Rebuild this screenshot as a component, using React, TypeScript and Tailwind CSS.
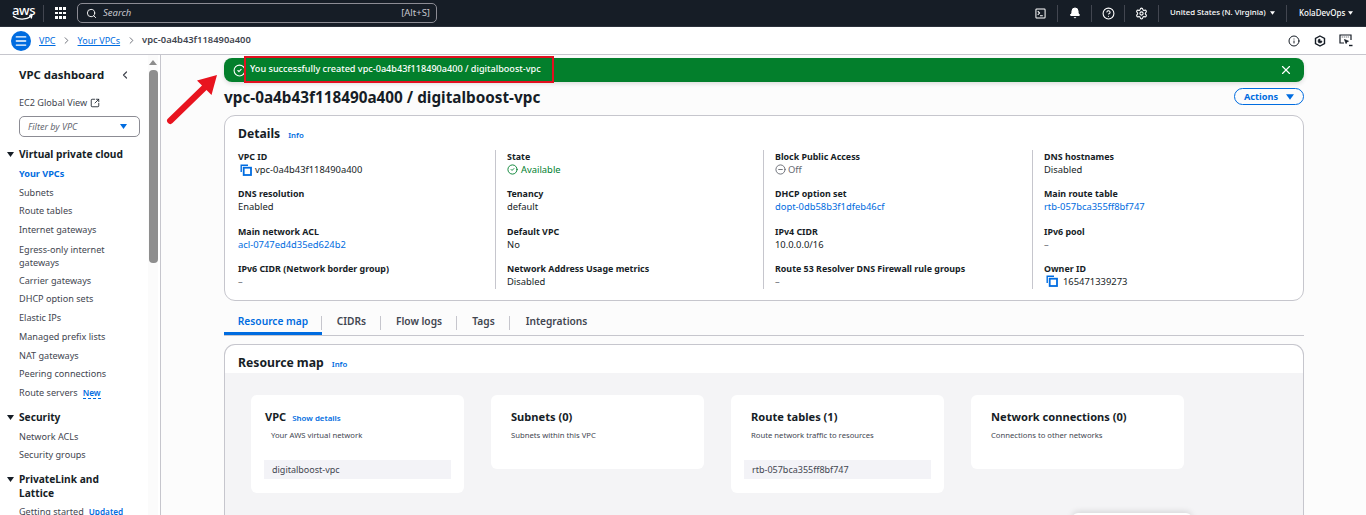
import React from 'react';
import { Search, Bell, CircleHelp, Settings, X, Info, Menu, ChevronRight, ChevronLeft, CircleCheck, CircleMinus, SquareArrowOutUpRight } from 'lucide-react';

const Tri = ({ className }: { className: string }) => (
  <svg viewBox="0 0 10 7" className={className} fill="currentColor"><path d="M0 0h10L5 7z" /></svg>
);

const CopyIcon = () => (
  <svg viewBox="0 0 12 12" className="w-[12px] h-[12px] text-[#006ce0] shrink-0" fill="none" stroke="currentColor" strokeWidth="1.4">
    <path d="M8 1.2H1.2V8" />
    <rect x="3.7" y="3.7" width="7.3" height="7.3" strokeWidth="1.8" />
  </svg>
);

const TerminalIcon = () => (
  <svg viewBox="0 0 12 12" className="w-[11px] h-[11px]" fill="none" stroke="currentColor" strokeWidth="1.1">
    <rect x="1" y="1" width="10" height="10" rx="0.8" />
    <path d="M3 3.5L5 5.5 3 7.5M5.5 8.5H8.5" />
  </svg>
);

const HexIcon = () => (
  <svg viewBox="0 0 12 12" className="w-[12px] h-[12px] text-[#161d26]" fill="none" stroke="currentColor" strokeWidth="1.4">
    <path d="M6 1l4.5 2.5v5L6 11 1.5 8.5v-5z" />
    <path d="M6 4a2 2 0 1 0 2 2H6z" fill="currentColor" strokeWidth="0.6" />
  </svg>
);

const ScreenIcon = () => (
  <svg viewBox="0 0 14 13" className="w-[14px] h-[13px] text-[#161d26]" fill="none" stroke="currentColor" strokeWidth="1.2">
    <path d="M5 9H1V1h11v5" />
    <path d="M2.8 3h.8M4.8 3h.8M6.8 3h.8M8.8 3h.8" strokeWidth="1" />
    <path d="M5.5 5.5l4 1.7-1.7.7-.7 1.7z" fill="currentColor" strokeWidth="0.8" />
    <path d="M10 11.5h3.5" strokeWidth="1.4" />
  </svg>
);

const Sep = () => <div className="w-px h-[17px] bg-[#424650] shrink-0" />;

const IconCell = ({ w, children }: { w: string; children: React.ReactNode }) => (
  <div className={`${w} flex justify-center items-center shrink-0`}>{children}</div>
);

const TopBar = () => (
  <header className="h-[27px] bg-[#161d26] flex items-center text-white shrink-0 border-b border-[#2a303a]">
    <div className="w-[43px] pl-[12px] flex flex-col items-start leading-none">
      <span className="text-[13px] font-medium leading-[9px] tracking-tight">aws</span>
      <svg viewBox="0 0 22 6" className="w-[22px] h-[6px] text-white" fill="none" stroke="currentColor" strokeWidth="1.2"><path d="M1 1c5 4 13 4 18 .5M17 .8l3-.3-.8 3" /></svg>
    </div>
    <Sep />
    <div className="w-[33px] flex justify-center">
      <div className="grid grid-cols-3 gap-[1.5px]">
        {Array.from({ length: 9 }).map((_, i) => <span key={i} className="w-[2.8px] h-[2.8px] bg-white" />)}
      </div>
    </div>
    <div className="w-[360px] h-[20px] border border-[#8c8c94] rounded-[5px] flex items-center pl-[8px] pr-[6px] text-[#c6c6cd] text-[9.5px]">
      <Search className="w-[11px] h-[11px] text-white mr-[6px]" strokeWidth={2} />
      <span className="italic flex-1">Search</span>
      <span>[Alt+S]</span>
    </div>
    <div className="flex-1" />
    <IconCell w="w-[24px] pr-[9px]"><TerminalIcon /></IconCell>
    <Sep />
    <IconCell w="w-[33px]"><Bell className="w-[12px] h-[12px]" fill="white" /></IconCell>
    <Sep />
    <IconCell w="w-[32px]"><CircleHelp className="w-[13px] h-[13px]" /></IconCell>
    <Sep />
    <IconCell w="w-[33px]"><Settings className="w-[13px] h-[13px]" /></IconCell>
    <Sep />
    <div className="w-[127px] flex items-center pl-[11px] shrink-0">
      <span className="text-[7.8px] font-medium whitespace-nowrap">United States (N. Virginia)</span>
      <Tri className="w-[5px] h-[4px] ml-[4px]" />
    </div>
    <Sep />
    <div className="w-[79px] flex items-center pl-[12px] shrink-0">
      <span className="text-[8px] font-medium">KolaDevOps</span>
      <Tri className="w-[5px] h-[4px] ml-[3px]" />
    </div>
  </header>
);

const BreadcrumbBar = () => (
  <div className="h-[28px] bg-white border-b border-[#c6c6cd] flex items-center shrink-0 text-[9px] pl-[11px] pr-[13px]">
    <div className="w-[20px] h-[20px] rounded-full bg-[#006ce0] flex items-center justify-center mr-[8px]">
      <Menu className="w-[14px] h-[14px] text-white" strokeWidth={2.4} />
    </div>
    <a className="text-[#006ce0] underline">VPC</a>
    <ChevronRight className="w-[11px] h-[11px] mx-[5.5px] text-[#656871]" />
    <a className="text-[#006ce0] underline">Your VPCs</a>
    <ChevronRight className="w-[11px] h-[11px] mx-[5.5px] text-[#656871]" />
    <span className="text-[#424650] font-semibold text-[9.4px]">vpc-0a4b43f118490a400</span>
    <div className="flex-1" />
    <Info className="w-[12px] h-[12px] text-[#161d26]" />
    <div className="ml-[14px] flex"><HexIcon /></div>
    <div className="ml-[13px] flex"><ScreenIcon /></div>
  </div>
);

const NavItem = ({ label, active, badge, two }: { label: string; active?: boolean; badge?: string; two?: boolean }) => (
  <div className={`${two ? 'h-[32px] leading-[13px] pt-[3px]' : 'h-[18.7px] leading-[18.7px]'} text-[9.1px] whitespace-pre-line ${active ? 'text-[#006ce0] font-bold' : 'text-[#424650]'}`}>
    {label}
    {badge && <span className="ml-[5px] text-[8.2px] text-[#006ce0] font-semibold border-b border-dashed border-[#006ce0]">{badge}</span>}
  </div>
);

const NavSection = ({ title }: { title: string }) => (
  <div className="flex items-start">
    <Tri className="w-[7px] h-[5px] text-[#161d26] -ml-[12px] mr-[5px] mt-[5px] shrink-0" />
    <div className="text-[10.2px] font-bold leading-[14px] text-[#161d26] whitespace-pre-line">{title}</div>
  </div>
);

const Sidebar = () => (
  <aside className="w-[161px] shrink-0 bg-white border-r border-[#c6c6cd] flex h-full overflow-hidden">
    <div className="w-[148px] pl-[19px] shrink-0 overflow-hidden">
      <div className="flex items-center h-[16px] mt-[12px] pr-[17px]">
        <span className="flex-1 text-[11.4px] font-bold text-[#161d26]">VPC dashboard</span>
        <ChevronLeft className="w-[12px] h-[12px] text-[#424650]" strokeWidth={2.4} />
      </div>
      <div className="flex items-center mt-[13px] text-[9.1px] text-[#424650] h-[14px]">
        EC2 Global View
        <SquareArrowOutUpRight className="w-[10px] h-[10px] ml-[3px] text-[#161d26]" strokeWidth={2} />
      </div>
      <div className="mt-[6px] w-[121px] h-[21px] border border-[#8c8c94] rounded-[5px] flex items-center pl-[8px] pr-[12px] text-[9px] italic text-[#656871]">
        <span className="flex-1">Filter by VPC</span>
        <Tri className="w-[7px] h-[5px] text-[#006ce0]" />
      </div>
      <div className="mt-[10px]"><NavSection title="Virtual private cloud" /></div>
      <div className="mt-[4px]">
        <NavItem label="Your VPCs" active />
        <NavItem label="Subnets" />
        <NavItem label="Route tables" />
        <NavItem label="Internet gateways" />
        <NavItem two label={'Egress-only internet\ngateways'} />
        <NavItem label="Carrier gateways" />
        <NavItem label="DHCP option sets" />
        <NavItem label="Elastic IPs" />
        <NavItem label="Managed prefix lists" />
        <NavItem label="NAT gateways" />
        <NavItem label="Peering connections" />
        <NavItem label="Route servers" badge="New" />
      </div>
      <div className="mt-[7px]"><NavSection title="Security" /></div>
      <div className="mt-[4px]">
        <NavItem label="Network ACLs" />
        <NavItem label="Security groups" />
      </div>
      <div className="mt-[7px]"><NavSection title={'PrivateLink and\nLattice'} /></div>
      <div className="mt-[3px]">
        <NavItem label="Getting started" badge="Updated" />
      </div>
    </div>
    <div className="w-[10px] shrink-0 bg-[#fbfbfb] flex flex-col items-center pt-[5px]">
      <svg viewBox="0 0 8 5" className="w-[8px] h-[5px] text-[#8c8c8c]" fill="currentColor"><path d="M4 0l4 5H0z" /></svg>
      <div className="w-[9px] h-[193px] mt-[5px] bg-[#8e8e8e] rounded-b-[4px] rounded-t-[4px]" />
    </div>
  </aside>
);

const Field = ({ label, children, link }: { label: string; children: React.ReactNode; link?: boolean }) => (
  <div className="h-[37.3px]">
    <div className="text-[8.9px] font-bold text-[#161d26] leading-[13px]">{label}</div>
    <div className={`text-[9.4px] leading-[13px] flex items-center ${link ? 'text-[#006ce0]' : 'text-[#161d26]'}`}>{children}</div>
  </div>
);

const Dash = () => <span className="text-[#656871]">–</span>;

const Details = () => (
  <section className="h-[186px] bg-white border border-[#c6c6cd] rounded-[11px] pl-[13px] pt-[9px]">
    <div className="flex items-baseline h-[19px]">
      <h2 className="text-[12.2px] font-bold text-[#161d26]">Details</h2>
      <a className="ml-[8px] text-[7.8px] font-semibold text-[#006ce0]">Info</a>
    </div>
    <div className="grid grid-cols-[258px_268px_269px_1fr] mt-[6px]">
      <div className="h-[139px] border-r border-[#c6c6cd]">
        <Field label="VPC ID"><span className="ml-[2px] mr-[3px] flex"><CopyIcon /></span>vpc-0a4b43f118490a400</Field>
        <Field label="DNS resolution">Enabled</Field>
        <Field label="Main network ACL" link>acl-0747ed4d35ed624b2</Field>
        <Field label="IPv6 CIDR (Network border group)"><Dash /></Field>
      </div>
      <div className="h-[139px] border-r border-[#c6c6cd] pl-[11px]">
        <Field label="State">
          <span className="text-[#00802f] flex items-center"><CircleCheck className="w-[11px] h-[11px] mr-[3px]" />Available</span>
        </Field>
        <Field label="Tenancy">default</Field>
        <Field label="Default VPC">No</Field>
        <Field label="Network Address Usage metrics">Disabled</Field>
      </div>
      <div className="h-[139px] border-r border-[#c6c6cd] pl-[11px]">
        <Field label="Block Public Access">
          <span className="text-[#656871] flex items-center"><CircleMinus className="w-[11px] h-[11px] mr-[2px]" />Off</span>
        </Field>
        <Field label="DHCP option set" link>dopt-0db58b3f1dfeb46cf</Field>
        <Field label="IPv4 CIDR">10.0.0.0/16</Field>
        <Field label="Route 53 Resolver DNS Firewall rule groups"><Dash /></Field>
      </div>
      <div className="h-[139px] pl-[11px]">
        <Field label="DNS hostnames">Disabled</Field>
        <Field label="Main route table" link>rtb-057bca355ff8bf747</Field>
        <Field label="IPv6 pool"><Dash /></Field>
        <Field label="Owner ID"><span className="ml-[2px] mr-[5px] flex"><CopyIcon /></span>165471339273</Field>
      </div>
    </div>
  </section>
);

const Tab = ({ label, active, w, last }: { label: string; active?: boolean; w: string; last?: boolean }) => (
  <div className={`${w} h-full flex items-start justify-center leading-[14px] relative text-[10.2px] font-semibold ${active ? 'text-[#006ce0] border-b-[3px] border-[#006ce0]' : 'text-[#424650]'}`}>
    <span>{label}</span>
    {!last && <span className="absolute right-0 top-[2px] h-[14px] w-px bg-[#c6c6cd]" />}
  </div>
);

const Tabs = () => (
  <div className="h-[22px] mt-[13px] flex border-b border-[#c6c6cd]">
    <Tab active label="Resource map" w="w-[98px]" />
    <Tab label="CIDRs" w="w-[59px]" />
    <Tab label="Flow logs" w="w-[76px]" />
    <Tab label="Tags" w="w-[53px]" />
    <Tab last label="Integrations" w="w-[93px]" />
  </div>
);

const MapCard = ({ title, sub, inset, vpc, action }: { title: string; sub: string; inset?: string; vpc?: boolean; action?: string }) => (
  <div className={`w-[213px] bg-white rounded-[6px] pt-[14px] ${inset ? 'h-[98px] px-[13px]' : 'h-[74px] px-[20px]'}`}>
    <div className={`flex items-baseline h-[16px] ${inset ? (vpc ? 'pl-px' : 'pl-[7px]') : ''}`}>
      <h3 className="text-[11.1px] font-bold text-[#161d26]">{title}</h3>
      {action && <a className="ml-[6px] text-[7.9px] font-semibold text-[#006ce0]">{action}</a>}
    </div>
    <p className={`mt-[4px] text-[7.7px] leading-[12px] text-[#424650] ${inset ? 'pl-[7px]' : ''}`}>{sub}</p>
    {inset && <div className="mt-[19px] h-[19px] bg-[#f3f3f7] pl-[8px] flex items-center text-[9px] text-[#424650]">{inset}</div>}
  </div>
);

const ResourceMap = () => (
  <section className="mt-[8px] bg-white border border-[#c6c6cd] rounded-t-[11px] border-b-0 h-[300px]">
    <div className="h-[28px] pl-[13px] flex items-baseline pt-[9px]">
      <h2 className="text-[12.2px] font-bold text-[#161d26]">Resource map</h2>
      <a className="ml-[8px] text-[7.8px] font-semibold text-[#006ce0]">Info</a>
    </div>
    <div className="h-full bg-[#f4f4f6] pt-[22px] pl-[26px] flex items-start gap-[27px]">
      <MapCard vpc title="VPC" action="Show details" sub="Your AWS virtual network" inset="digitalboost-vpc" />
      <MapCard title="Subnets (0)" sub="Subnets within this VPC" />
      <MapCard title="Route tables (1)" sub="Route network traffic to resources" inset="rtb-057bca355ff8bf747" />
      <MapCard title="Network connections (0)" sub="Connections to other networks" />
    </div>
  </section>
);

export default function App() {
  return (
    <div className="relative w-[1366px] h-[515px] overflow-hidden bg-[#fcfcfc] flex flex-col font-['Noto_Sans','Open_Sans',sans-serif]">
      <TopBar />
      <BreadcrumbBar />
      <div className="flex flex-1 min-h-0">
        <Sidebar />
        <main className="flex-1 min-w-0 pl-[63px] pr-[62px] pt-[3px]">
          <div className="h-[24px] bg-[#037f2c] rounded-[8px] flex items-center pl-[9px] pr-[11px] text-white shadow-[0_2px_4px_rgba(0,0,0,0.12)]">
            <CircleCheck className="w-[13px] h-[13px] mr-[4px]" />
            <span className="flex-1 text-[9.1px] font-medium leading-[22px] h-[24px]">You successfully created vpc-0a4b43f118490a400 / digitalboost-vpc</span>
            <X className="w-[14px] h-[14px]" />
          </div>
          <div className="flex items-start justify-between mt-[6px] h-[17px]">
            <h1 className="text-[15.3px] font-bold leading-[19px] text-[#161d26] whitespace-nowrap">vpc-0a4b43f118490a400 / digitalboost-vpc</h1>
            <button className="w-[70px] h-[17px] border border-[#006ce0] rounded-full flex items-center justify-center text-[#006ce0] text-[9.2px] font-bold">
              Actions
              <Tri className="w-[8px] h-[6px] ml-[8px]" />
            </button>
          </div>
          <div className="mt-[10px]"><Details /></div>
          <Tabs />
          <ResourceMap />
        </main>
      </div>
      {/* annotation drawn on top of the screenshot */}
      <div className="absolute left-[244px] top-[56px] w-[310px] h-[27px] border-2 border-[#e2101f]" />
      <svg className="absolute left-[165px] top-[70px] w-[56px] h-[56px] text-[#e8141f]" viewBox="0 0 56 56" fill="currentColor">
        <path d="M3 48.5L37 15.5 32 10.5 52 5 46.5 25 41.5 20 7.5 53a3 3 0 0 1-4.5-4.5z" />
      </svg>
      <div className="absolute left-[1072px] top-[513px] w-[120px] h-[6px] rounded-t-[6px] bg-white shadow-[0_-1px_6px_rgba(0,0,0,0.15)]" />
    </div>
  );
}
